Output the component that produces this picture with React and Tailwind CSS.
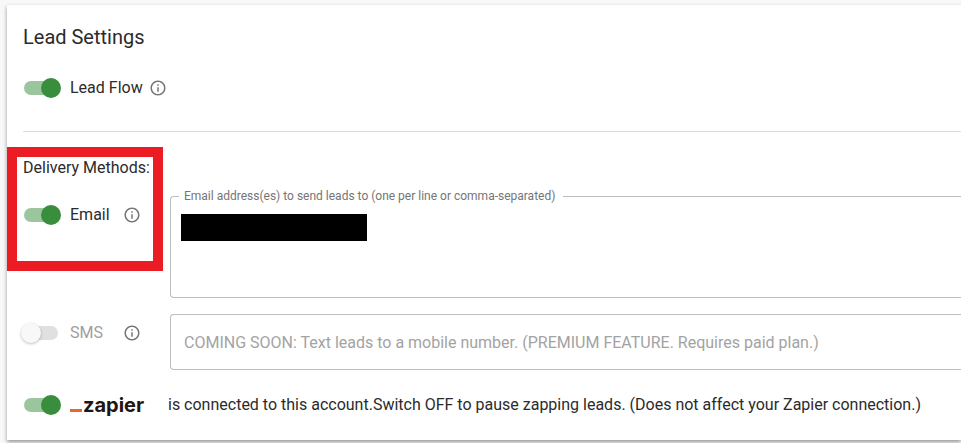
import React, { useState } from 'react';
import clsx from 'clsx';
import { MdInfoOutline } from 'react-icons/md';

function Switch({ id, className, ...props }) {
  return (
    <input
      id={id}
      type="checkbox"
      role="switch"
      className={clsx(
        'relative ml-px mr-3 h-3.5 w-[34px] shrink-0 cursor-pointer appearance-none rounded-full bg-[#9e9e9e] checked:bg-[#9bc69d] disabled:cursor-default disabled:bg-[#e0e0e0]',
        'before:absolute before:-left-[3px] before:-top-[3px] before:size-5 before:rounded-full before:bg-[#f8f8f8] before:shadow-[0_1px_3px_rgba(0,0,0,0.25)] checked:before:left-[17px] checked:before:bg-[#388e3c] checked:before:shadow-none',
        className
      )}
      {...props}
    />
  );
}

function InfoIcon({ label }) {
  return <MdInfoOutline className="size-[18px] shrink-0 text-[#757575]" role="img" aria-label={label} />;
}

function ZapierLogo() {
  return (
    <span className="flex items-center">
      <svg className="mt-2.5 h-[3px] w-3" viewBox="0 0 12 3" aria-hidden="true">
        <rect width="12" height="3" fill="#e8682f" />
      </svg>
      <span className="pl-px font-['Inter',sans-serif] text-xl leading-6 font-bold text-[#201515]">zapier</span>
    </span>
  );
}

export default function App() {
  const [leadFlow, setLeadFlow] = useState(true);
  const [email, setEmail] = useState(true);
  const [zapier, setZapier] = useState(true);
  const [addresses, setAddresses] = useState('');

  return (
    <div className="overflow-hidden bg-[#f8f8f8] pt-[5px] pb-[3px] pl-[7px] font-['Roboto',sans-serif] text-base text-[#2b2b2b]">
      <main className="bg-white p-4 pr-0 shadow-[0_2px_4px_rgba(0,0,0,0.4)]">
        <h1 className="text-xl leading-8">Lead Settings</h1>

        <div className="mt-4 flex h-[38px] items-center">
          <Switch id="lead-flow" checked={leadFlow} onChange={(e) => setLeadFlow(e.target.checked)} />
          <label htmlFor="lead-flow" className="mr-1.5">Lead Flow</label>
          <InfoIcon label="About lead flow" />
        </div>

        <hr className="mt-6 border-[#dcdcdc]" />

        <section className="mt-6">
          <div className="relative">
            {/* Highlight frame around the email delivery toggle */}
            <div className="pointer-events-none absolute -top-[9px] -left-4 h-[124px] w-[156px] border-10 border-[#ec1c24]" />
            <h2 className="leading-6">Delivery Methods:</h2>

            <div className="mt-2 grid grid-cols-[147px_1fr]">
              <div className="mt-2 flex h-[38px] items-center pr-[29px]">
                <Switch id="email" checked={email} onChange={(e) => setEmail(e.target.checked)} />
                <label htmlFor="email" className="mr-auto">Email</label>
                <InfoIcon label="About email delivery" />
              </div>
              <fieldset className="relative min-w-0 rounded-l border border-r-0 border-[#bdbdbd] pl-2">
                <legend className="pr-2 pl-[5px] text-xs leading-4 text-[#757575]">
                  <label htmlFor="addresses">Email address(es) to send leads to (one per line or comma-separated)</label>
                </legend>
                <textarea
                  id="addresses"
                  rows={3}
                  value={addresses}
                  onChange={(e) => setAddresses(e.target.value)}
                  className="block h-[93px] w-full resize-none px-[5px] py-1 outline-none"
                />
                {/* Redacted address */}
                <div className="absolute top-2.5 left-2.5 h-[27px] w-[186px] bg-black" />
              </fieldset>
            </div>
          </div>

          <div className="mt-4 grid grid-cols-[147px_1fr]">
            <div className="flex h-[38px] items-center pr-[29px]">
              <Switch id="sms" disabled />
              <label htmlFor="sms" className="mr-auto text-[#9e9e9e]">SMS</label>
              <InfoIcon label="About SMS delivery" />
            </div>
            <input
              type="text"
              disabled
              aria-label="Mobile number"
              placeholder="COMING SOON: Text leads to a mobile number. (PREMIUM FEATURE. Requires paid plan.)"
              className="h-14 w-full rounded-l border border-r-0 border-[#bdbdbd] px-[13px] placeholder:text-[#a3a3a3]"
            />
          </div>

          <div className="mt-4 grid grid-cols-[145px_1fr] items-center">
            <div className="flex h-[38px] items-center">
              <Switch id="zapier" checked={zapier} onChange={(e) => setZapier(e.target.checked)} />
              <label htmlFor="zapier">
                <ZapierLogo />
              </label>
            </div>
            <p>
              is connected to this account.Switch OFF to pause zapping leads. (Does not affect your Zapier connection.)
            </p>
          </div>
        </section>
      </main>
    </div>
  );
}
